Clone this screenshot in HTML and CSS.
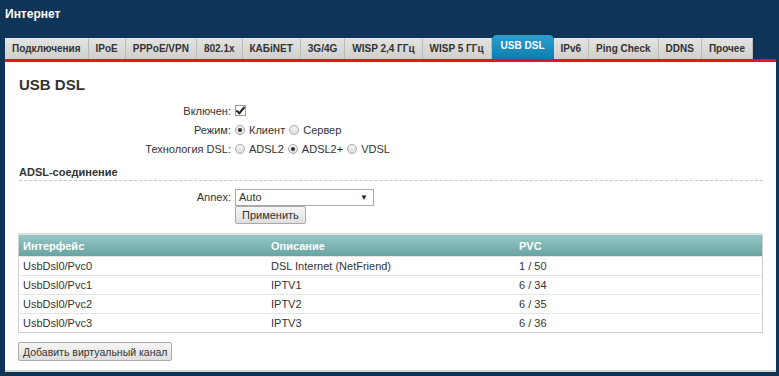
FILE: index.html
```html
<!DOCTYPE html>
<html lang="ru">
<head>
  <meta charset="UTF-8" />
  <title>Интернет</title>
  <link rel="stylesheet" href="styles.css">
</head>
<body>
  <h1 class="page-title">Интернет</h1>

  <div class="tabs">
    <div class="tab">Подключения</div>
    <div class="tab">IPoE</div>
    <div class="tab">PPPoE/VPN</div>
    <div class="tab">802.1x</div>
    <div class="tab">КАБiNET</div>
    <div class="tab">3G/4G</div>
    <div class="tab">WISP 2,4 ГГц</div>
    <div class="tab">WISP 5 ГГц</div>
    <div class="tab active">USB DSL</div>
    <div class="tab">IPv6</div>
    <div class="tab">Ping Check</div>
    <div class="tab">DDNS</div>
    <div class="tab">Прочее</div>
  </div>

  <div class="panel">
    <h2>USB DSL</h2>

    <div class="form">
      <div class="row">
        <span class="label">Включен:</span>
        <span class="check checked"></span>
      </div>
      <div class="row">
        <span class="label">Режим:</span>
        <span class="radio on"></span><span class="opt">Клиент</span>
        <span class="radio"></span><span class="opt">Сервер</span>
      </div>
      <div class="row">
        <span class="label">Технология DSL:</span>
        <span class="radio"></span><span class="opt">ADSL2</span>
        <span class="radio on"></span><span class="opt">ADSL2+</span>
        <span class="radio"></span><span class="opt">VDSL</span>
      </div>
    </div>

    <h3 class="section">ADSL-соединение</h3>

    <div class="form annex">
      <div class="row">
        <span class="label">Annex:</span>
        <div class="select"><span>Auto</span><span class="arrow">▼</span></div>
      </div>
      <div class="row">
        <span class="label"></span>
        <button class="btn">Применить</button>
      </div>
    </div>

    <table class="grid">
      <thead>
        <tr><th>Интерфейс</th><th>Описание</th><th>PVC</th></tr>
      </thead>
      <tbody>
        <tr><td>UsbDsl0/Pvc0</td><td>DSL Internet (NetFriend)</td><td>1 / 50</td></tr>
        <tr><td>UsbDsl0/Pvc1</td><td>IPTV1</td><td>6 / 34</td></tr>
        <tr><td>UsbDsl0/Pvc2</td><td>IPTV2</td><td>6 / 35</td></tr>
        <tr><td>UsbDsl0/Pvc3</td><td>IPTV3</td><td>6 / 36</td></tr>
      </tbody>
    </table>

    <button class="btn add">Добавить виртуальный канал</button>
  </div>
</body>
</html>
```

FILE: styles.css
```css
body {
  margin: 0;
  height: 376px;
  overflow: hidden;
  background: #0e3457;
  font-family: "Liberation Sans", Arial, sans-serif;
  font-size: 11px;
  color: #333;
}
.page-title {
  margin: 0;
  padding: 7px 5px 0;
  height: 31px;
  font-size: 12px;
  font-weight: bold;
  color: #fff;
}
.tabs {
  display: flex;
  align-items: flex-end;
  height: 21px;
  margin: 0 3px 0 5px;
  border-bottom: 3px solid #e3161b;
}
.tab {
  height: 20px;
  line-height: 20px;
  padding: 0 7px;
  background: linear-gradient(#e2e2e0, #cfcfcc);
  border-right: 1px solid #b9b9b6;
  border-top: 1px solid #e8e8e6;
  font-size: 10px;
  font-weight: bold;
  color: #333;
  white-space: nowrap;
}
.tab.active {
  height: 24px;
  line-height: 22px;
  padding: 0 9px;
  border: none;
  border-radius: 5px 5px 0 0;
  background: linear-gradient(#2c9fcf, #0d7db0);
  color: #fff;
}
.panel {
  height: 307px;
  margin: 0 3px 0 5px;
  padding: 1px 13px 0;
  background: #fff;
  border-bottom: 2px solid #d4d4d0;
}
.panel h2 {
  margin: 13px 0 8px 1px;
  font-size: 15px;
  color: #333;
}
.form .row {
  display: flex;
  align-items: center;
  height: 19px;
}
.label {
  width: 213px;
  padding-right: 4px;
  text-align: right;
}
.check {
  width: 9px;
  height: 9px;
  border: 1px solid #999;
  background: #fff;
  position: relative;
}
.check.checked::after {
  content: "";
  position: absolute;
  left: 2px;
  top: -1px;
  width: 3px;
  height: 7px;
  border: solid #222;
  border-width: 0 2px 2px 0;
  transform: rotate(40deg);
}
.radio {
  width: 10px;
  height: 10px;
  border: 1px solid #aaa;
  border-radius: 50%;
  background: linear-gradient(#f4f4f4, #ddd);
  box-sizing: border-box;
  margin-right: 4px;
  position: relative;
}
.radio.on::after {
  content: "";
  position: absolute;
  left: 2px;
  top: 2px;
  width: 4px;
  height: 4px;
  border-radius: 50%;
  background: #333;
}
.opt {
  margin-right: 4px;
}
.section {
  margin: 8px 0 0 1px;
  padding-bottom: 2px;
  font-size: 11px;
  font-weight: bold;
  border-bottom: 1px dashed #c8c8c8;
}
.annex {
  margin-top: 7px;
}
.annex .row {
  height: 18px;
}
.select {
  display: flex;
  justify-content: space-between;
  align-items: center;
  width: 129px;
  height: 15px;
  padding: 0 5px 0 3px;
  border: 1px solid #a9a9a9;
  font-size: 11px;
}
.arrow {
  font-size: 8px;
  color: #222;
}
.btn {
  height: 18px;
  padding: 0 6px;
  border: 1px solid #aaa;
  border-radius: 2px;
  background: linear-gradient(#f6f6f6, #dedede);
  font-family: inherit;
  font-size: 11px;
  color: #333;
}
.grid {
  width: 100%;
  margin-top: 9px;
  border-collapse: collapse;
  border: 1px solid #cfcfcf;
}
.grid th {
  height: 21px;
  padding: 0 4px;
  text-align: left;
  color: #fff;
  font-weight: bold;
  background: linear-gradient(#93c8c5, #69a3a1);
  border-top: 2px solid #e0e0dd;
}
.grid td {
  height: 18px;
  padding: 0 4px;
  border-top: 1px solid #e4e4e4;
}
.grid th:nth-child(1), .grid td:nth-child(1) { width: 240px; }
.grid th:nth-child(2), .grid td:nth-child(2) { width: 240px; }
.btn.add {
  margin-top: 9px;
  height: 19px;
  padding: 0 4px;
  font-size: 10.5px;
}
```
